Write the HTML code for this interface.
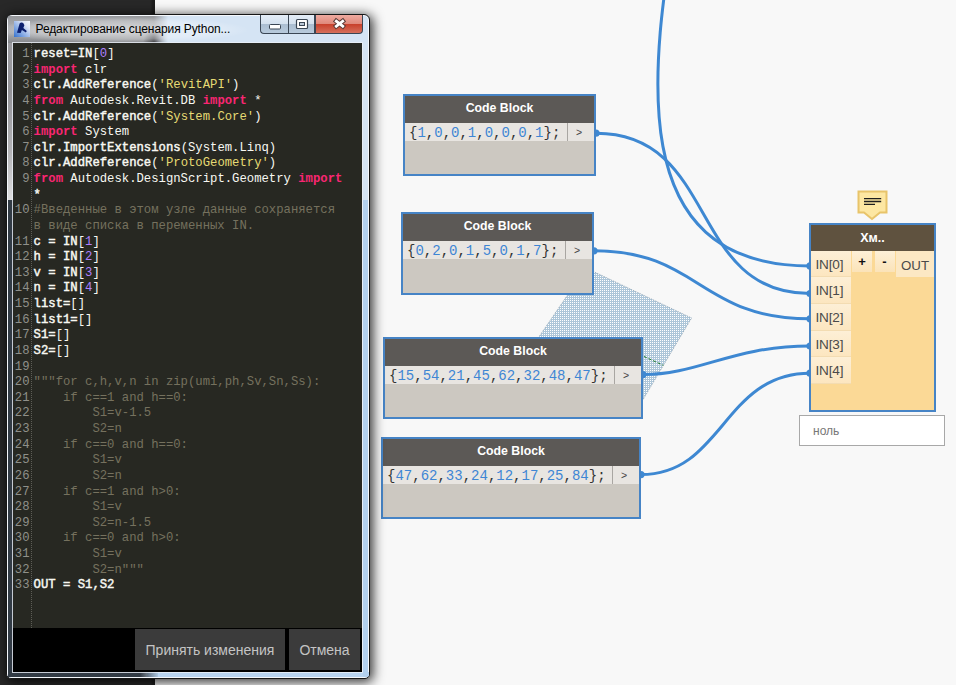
<!DOCTYPE html>
<html><head><meta charset="utf-8">
<style>
*{margin:0;padding:0;box-sizing:border-box}
html,body{width:956px;height:685px;overflow:hidden;background:#f8f8f8;position:relative;font-family:"Liberation Sans",sans-serif}
.abs{position:absolute}
#darkbg{left:0;top:0;width:155px;height:685px;background:linear-gradient(to right,#282828 0,#282828 150px,#1c1c1c 153px,#1c1c1c 155px)}
.node{position:absolute;border:2px solid #4684c6;background:#ccc8c1}
.node .hd{position:absolute;left:0;right:0;top:0;height:26.5px;background:#5c5956;color:#fff;font-weight:bold;font-size:12.3px;text-align:center;line-height:25.8px}
.node .row{position:absolute;left:0;right:0;top:26.5px;height:18px;background:#e8e5e1}
.node .code{position:absolute;left:4px;top:1px;font-family:"Liberation Mono",monospace;font-size:14px;line-height:18.5px;color:#333}
.node .code b{font-weight:normal;color:#3e86d4}
.node .outp{position:absolute;right:0;top:0;height:18px;width:26.6px;border-left:1px solid #a9a6a2;background:#e8e5e1;font-size:10.5px;line-height:18px;color:#444;text-align:left;padding-left:7.5px}
#py{left:809px;top:223px;width:127px;height:189px;border:2px solid #4684c6;background:#fbd996}
.pyt{left:0;width:123px;top:0;height:25.5px;text-align:center;color:#fff;font-weight:bold;font-size:12.5px;line-height:27px}
.pin{position:absolute;left:0;width:40px;background:linear-gradient(to bottom,#fdefd6,#fce6c0);border-bottom:1px solid #f3dcb2;color:#4a4a4a;font-size:13.6px;line-height:28px;padding-left:4.5px;letter-spacing:-0.2px}
.pbt{position:absolute;top:25.5px;height:21px;background:linear-gradient(to bottom,#fdf0d8,#fbe3b8);color:#111;font-size:13px;line-height:21px;text-align:center}
.pout{left:85px;top:25.5px;width:38px;height:26px;background:#fce8c4;color:#4a4a4a;font-size:13.3px;line-height:29px;text-align:center}
#win{left:6px;top:14px;width:364px;height:665px;border:1px solid #161616;border-radius:6px 6px 5px 5px;background:#d5e4f4;box-shadow:2px 2px 12px 1px rgba(0,0,0,.8), inset 0 0 0 1px rgba(255,255,255,.75);overflow:hidden}
#tgray{left:1px;top:1px;width:175px;height:28px;background:radial-gradient(ellipse 12px 14px at 147px 27px,rgba(35,35,40,.85),rgba(35,35,40,0)),linear-gradient(to bottom,#95979b 0,#a8aaae 35%,#aaacb0 60%,#818387 100%);-webkit-mask-image:linear-gradient(to right,#000 0,#000 146px,transparent 160px)}
#tglow{left:-10px;top:2px;width:250px;height:26px;background:radial-gradient(ellipse at center,rgba(255,255,255,.5) 0,rgba(255,255,255,.3) 50%,rgba(255,255,255,0) 72%)}
#lfgray{left:1px;top:28px;width:5px;height:157px;background:linear-gradient(to bottom,#9c9ca0 0,#939397 30%,#b4b4b7 70%,#dedee0 100%)}
#lfdark{left:1px;top:185px;width:5px;height:477px;background:#323b45}
#bfblue{left:140px;top:657px;width:222px;height:5px;background:#b8d4f0}
#bfdark{left:1px;top:657px;width:150px;height:5px;background:linear-gradient(to right,#323b45 0,#323b45 132px,rgba(50,59,69,0) 152px)}
#rfblue{left:356px;top:185px;width:5px;height:477px;background:#b2d0ee}
#title{left:28.5px;top:6.6px;font-size:12px;color:#000;white-space:nowrap;line-height:14px;letter-spacing:-0.1px}
#icon{left:7px;top:6px;width:16px;height:16px;background:linear-gradient(45deg,#3472cf 0,#8fb0e6 40%,#dfe6f6 75%,#f6f8fc 100%)}
.wb{position:absolute;top:0;height:19px;border:1px solid #3a4654;border-top:none}
#bmin{left:253px;width:28px;border-radius:0 0 0 4px;background:linear-gradient(to bottom,#e4edf7 0,#d3e0ee 50%,#aabdd1 52%,#b8cadc 100%);border-right:none}
#bmax{left:281px;width:27px;background:linear-gradient(to bottom,#e4edf7 0,#d3e0ee 50%,#aabdd1 52%,#b8cadc 100%);border-left:1px solid #3a4654}
#bcls{left:308px;width:48px;border-radius:0 0 4px 0;background:linear-gradient(to bottom,#eeaaa0 0,#e08a7c 48%,#c8412c 52%,#d6705c 100%)}
#editor{left:13px;top:43px;width:349px;height:585px;background:#272822;overflow:hidden}
#inner{left:13px;top:43px;width:349px;height:629px;background:#000;box-shadow:0 0 0 1px rgba(235,240,248,.8)}
.mono{font-family:"Liberation Mono",monospace;font-size:12.25px;line-height:15.62px;white-space:pre}
#gutter{left:1.5px;top:4px;width:15px;text-align:right;color:#8f908a}
#sep{left:18px;top:0;width:1px;height:585px;background:repeating-linear-gradient(to bottom,#5e5e57 0 1px,transparent 1px 2px)}
#code{left:20.6px;top:4px;color:#f8f8f2}
.k{color:#f92672;font-weight:bold}
.s{color:#e6db74}
.n{color:#ae81ff}
.b{font-weight:normal;-webkit-text-stroke:0.45px #f8f8f2}
.c{color:#75715e}
#bottom{left:13px;top:628px;width:349px;height:44px;background:#000}
.btn{position:absolute;top:629px;height:41px;background:#3b3b3b;color:#c4c4c4;font-size:14px;text-align:center;line-height:43px}
</style></head>
<body>
<div id="darkbg" class="abs"></div>

<svg class="abs" style="left:0;top:0" width="956" height="685">
  <defs><pattern id="dots" width="2" height="2" patternUnits="userSpaceOnUse"><rect width="2" height="2" fill="#adc6d9"/><rect x="0" y="0" width="1" height="1" fill="#ffffff"/></pattern></defs>
  <polygon points="586,268 691.6,318 631.5,419 482.7,419" fill="url(#dots)"/>
  <polyline points="586,268 691.6,318 631.5,419" fill="none" stroke="#7f95a6" stroke-width="0.7" stroke-dasharray="1 1"/>
  <line x1="539.5" y1="336" x2="567.4" y2="295.2" stroke="#7f95a6" stroke-width="0.7" stroke-dasharray="1 1"/>
  <line x1="644" y1="356.5" x2="663.3" y2="365.3" stroke="#1d7a28" stroke-width="1" stroke-dasharray="3 2"/>
</svg>

<svg class="abs" style="left:0;top:0" width="956" height="685" fill="none" stroke="#3e88d2" stroke-width="3">
  <path d="M662.4,-242.4 C766.3,-242.4 508.8,265.9 810,265.9"/>
  <path d="M596,133.2 C718.6,133.2 687.8,293.5 810,293.5"/>
  <path d="M594,250.8 C699.4,250.8 699.6,318.8 810,318.8"/>
  <path d="M643,374.6 C699.1,374.6 731.7,346 810,346"/>
  <path d="M641,474.6 C723.2,474.6 723,373.2 810,373.2"/>
  <g fill="#3e88d2" stroke="none">
    <circle cx="596" cy="133.2" r="3.6"/><circle cx="594" cy="250.8" r="3.6"/><circle cx="643" cy="374.6" r="3.6"/><circle cx="641" cy="474.6" r="3.6"/>
    <circle cx="810" cy="265.9" r="3.6"/><circle cx="810" cy="293.5" r="3.6"/><circle cx="810" cy="318.8" r="3.6"/><circle cx="810" cy="346" r="3.6"/><circle cx="810" cy="373.2" r="3.6"/>
  </g>
</svg>

<div class="node" style="left:403px;top:94px;width:193px;height:82px">
  <div class="hd">Code Block</div>
  <div class="row"><div class="code">{<b>1</b>,<b>0</b>,<b>0</b>,<b>1</b>,<b>0</b>,<b>0</b>,<b>0</b>,<b>1</b>};</div><div class="outp">&gt;</div></div>
</div>
<div class="node" style="left:401px;top:212px;width:193px;height:83px">
  <div class="hd">Code Block</div>
  <div class="row"><div class="code">{<b>0</b>,<b>2</b>,<b>0</b>,<b>1</b>,<b>5</b>,<b>0</b>,<b>1</b>,<b>7</b>};</div><div class="outp">&gt;</div></div>
</div>
<div class="node" style="left:383px;top:337px;width:260px;height:82px">
  <div class="hd">Code Block</div>
  <div class="row"><div class="code">{<b>15</b>,<b>54</b>,<b>21</b>,<b>45</b>,<b>62</b>,<b>32</b>,<b>48</b>,<b>47</b>};</div><div class="outp">&gt;</div></div>
</div>
<div class="node" style="left:381px;top:437px;width:260px;height:82px">
  <div class="hd">Code Block</div>
  <div class="row"><div class="code">{<b>47</b>,<b>62</b>,<b>33</b>,<b>24</b>,<b>12</b>,<b>17</b>,<b>25</b>,<b>84</b>};</div><div class="outp">&gt;</div></div>
</div>

<div id="py" class="abs">
  <div class="abs" style="left:0;top:0;width:123px;height:25.5px;background:#5f523f"></div>
  <div class="abs pyt">Хм..</div>
  <div class="pin" style="top:25.5px;height:26.5px">IN[0]</div>
  <div class="pin" style="top:52px;height:27px">IN[1]</div>
  <div class="pin" style="top:79px;height:26.5px">IN[2]</div>
  <div class="pin" style="top:105.5px;height:26.5px">IN[3]</div>
  <div class="pin" style="top:132px;height:27px">IN[4]</div>
  <div class="pbt" style="left:41px;width:20px;font-weight:bold">+</div>
  <div class="pbt" style="left:63.5px;width:20px;font-weight:bold">-</div>
  <div class="abs pout">OUT</div>
</div>
<div class="abs" style="left:799px;top:415px;width:146px;height:31px;border:1px solid #a8a8a8;background:#fff;color:#777;font-size:12px;line-height:30px;padding-left:13px">ноль</div>
<svg class="abs" style="left:857px;top:190px" width="31" height="31"><path d="M1.5,1.5 H29.5 V22.5 H23 L15,29 L7,22.5 H1.5 Z" fill="#fde7a2" stroke="#e8c46a" stroke-width="2"/><path d="M7,8.6 H24.2 M7,11.5 H24.2 M7,14.4 H18" stroke="#1e1e1e" stroke-width="1.4"/></svg>



<div id="win" class="abs">
  <div id="tgray" class="abs"></div>
  <div id="tglow" class="abs"></div>
  <div id="lfgray" class="abs"></div>
  <div id="lfdark" class="abs"></div>
  <div id="bfblue" class="abs"></div>
  <div id="bfdark" class="abs"></div>
  <div id="rfblue" class="abs"></div>
  <div id="icon" class="abs"><svg width="16" height="16" style="position:absolute;left:0;top:0"><path d="M3,11.8 L5.6,2.6 Q7.2,0.7 9.2,1.9 L10.4,4.3 L9.3,6.9 L12.8,10.1 L11.9,11.6 L7.9,9.1 L6.6,11.9 Z" fill="#0c1f6e"/></svg></div>
  <div id="title" class="abs">Редактирование сценария Python...</div>
  <div id="bmin" class="wb"><svg width="28" height="19" style="position:absolute;left:0;top:0"><rect x="8.5" y="9.5" width="11" height="4.5" rx="1" fill="#fff" stroke="#3a4654" stroke-width="1"/></svg></div>
  <div id="bmax" class="wb"><svg width="27" height="19" style="position:absolute;left:0;top:0"><rect x="7.5" y="4.5" width="11" height="9" rx="1" fill="#fff" stroke="#3a4654" stroke-width="1.2"/><rect x="10.5" y="7.5" width="5" height="3" fill="#b9c7d6" stroke="#3a4654" stroke-width="1"/></svg></div>
  <div id="bcls" class="wb"><svg width="47" height="19" style="position:absolute;left:0;top:0"><path d="M20.3,6.2 L26.7,11.2 M26.7,6.2 L20.3,11.2" stroke="#5a3a36" stroke-width="4.8" stroke-linecap="square"/><path d="M20.3,6.2 L26.7,11.2 M26.7,6.2 L20.3,11.2" stroke="#fff" stroke-width="2.8" stroke-linecap="square"/></svg></div>
</div>
<div id="inner" class="abs"></div>
<div id="editor" class="abs">
  <div id="gutter" class="abs mono">1
2
3
4
5
6
7
8
9

10

11
12
13
14
15
16
17
18
19
20
21
22
23
24
25
26
27
28
29
30
31
32
33</div>
  <div id="sep" class="abs"></div>
  <div id="code" class="abs mono"><span class="b">reset=IN</span><span class="r">[</span><span class="n">0</span><span class="r">]</span>
<span class="k">import</span><span class="r"> clr</span>
<span class="b">clr.AddReference</span><span class="r">(</span><span class="s">'RevitAPI'</span><span class="r">)</span>
<span class="k">from</span><span class="r"> Autodesk.Revit.DB </span><span class="k">import</span><span class="r"> *</span>
<span class="b">clr.AddReference</span><span class="r">(</span><span class="s">'System.Core'</span><span class="r">)</span>
<span class="k">import</span><span class="r"> System</span>
<span class="b">clr.ImportExtensions</span><span class="r">(System.Linq)</span>
<span class="b">clr.AddReference</span><span class="r">(</span><span class="s">'ProtoGeometry'</span><span class="r">)</span>
<span class="k">from</span><span class="r"> Autodesk.DesignScript.Geometry </span><span class="k">import</span>
<span class="b">*</span>
<span class="c">#Введенные в этом узле данные сохраняется</span>
<span class="c">в виде списка в переменных IN.</span>
<span class="b">c = IN</span><span class="r">[</span><span class="n">1</span><span class="r">]</span>
<span class="b">h = IN</span><span class="r">[</span><span class="n">2</span><span class="r">]</span>
<span class="b">v = IN</span><span class="r">[</span><span class="n">3</span><span class="r">]</span>
<span class="b">n = IN</span><span class="r">[</span><span class="n">4</span><span class="r">]</span>
<span class="b">list=</span><span class="r">[]</span>
<span class="b">list1=</span><span class="r">[]</span>
<span class="b">S1=</span><span class="r">[]</span>
<span class="b">S2=</span><span class="r">[]</span>

<span class="c">"""for c,h,v,n in zip(umi,ph,Sv,Sn,Ss):</span>
<span class="c">    if c==1 and h==0:</span>
<span class="c">        S1=v-1.5</span>
<span class="c">        S2=n</span>
<span class="c">    if c==0 and h==0:</span>
<span class="c">        S1=v</span>
<span class="c">        S2=n</span>
<span class="c">    if c==1 and h&gt;0:</span>
<span class="c">        S1=v</span>
<span class="c">        S2=n-1.5</span>
<span class="c">    if c==0 and h&gt;0:</span>
<span class="c">        S1=v</span>
<span class="c">        S2=n"""</span>
<span class="b">OUT = S1,S2</span></div>
</div>
<div id="bottom" class="abs"></div>
<div class="btn" style="left:135px;width:150px">Принять изменения</div>
<div class="btn" style="left:289px;width:71px">Отмена</div>

</body></html>
